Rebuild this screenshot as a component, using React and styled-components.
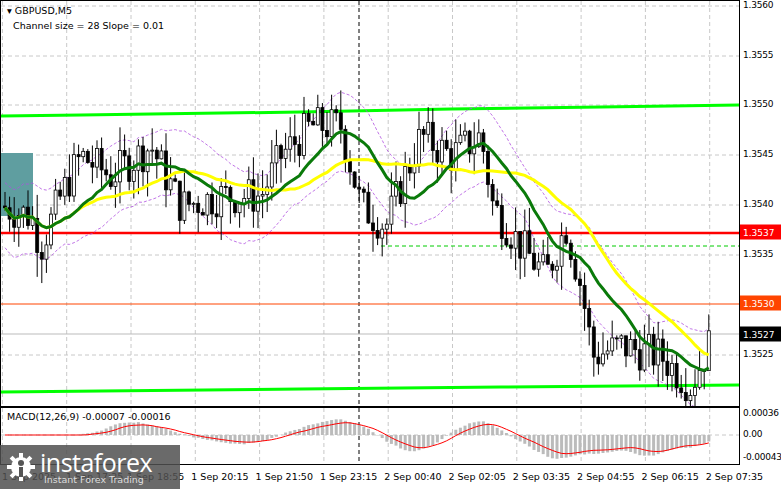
import React from "react";
import styled, { createGlobalStyle } from "styled-components";

const Global = createGlobalStyle`
  html,body{margin:0;padding:0;background:#fff;}
  body{font-family:"DejaVu Sans",Tahoma,sans-serif;}
`;
const W = 740;
const Page = styled.div`width:781px;height:489px;display:flex;flex-direction:column;background:#fff;position:relative;overflow:hidden;`;
const Row = styled.div`display:flex;height:${p => p.h}px;`;
const Pane = styled.div`width:${W - 2}px;height:${p => p.h - 2}px;border:1px solid #000;position:relative;flex:none;`;
const Axis = styled.div`flex:1;position:relative;font-size:9px;color:#000;`;
const Tick = styled.div`position:absolute;left:3px;transform:translateY(-50%);white-space:nowrap;letter-spacing:-0.2px;`;
const Tag = styled.div`position:absolute;left:0;width:38px;height:15px;transform:translateY(-50%);background:${p => p.bg};color:${p => p.fg};display:flex;align-items:center;padding-left:3px;font-size:9px;`;
const TimeRow = styled.div`height:24px;position:relative;font-size:9.5px;`;
const TimeLbl = styled.div`position:absolute;top:6px;white-space:nowrap;`;
const Title = styled.div`position:absolute;left:6px;top:2px;font-size:9.5px;line-height:15px;`;
const MacdTitle = styled.div`position:absolute;left:6px;top:3px;font-size:9.5px;`;
const Logo = styled.div`position:absolute;left:0;bottom:0;width:180px;height:44px;background:rgba(80,80,80,0.85);display:flex;align-items:center;gap:4px;padding-left:6px;box-sizing:border-box;color:#fff;`;
const LogoText = styled.div`display:flex;flex-direction:column;line-height:1;`;
const Big = styled.div`font-size:25px;font-family:"Open Sans",sans-serif;letter-spacing:-0.5px;`;
const Small = styled.div`font-size:9.5px;color:#ddd;margin-left:4px;`;

const y = p => 5 + (1.356 - p) * 1e5;
const pts = [[0,1.3540],[30,1.3539],[40,1.3536],[60,1.3541],[80,1.3545],[110,1.3543],[150,1.3546],[180,1.3540],[220,1.3541],[260,1.3541],[280,1.3545],[310,1.3548],[340,1.3548],[360,1.3540],[385,1.3538],[400,1.3542],[420,1.3547],[450,1.3545],[480,1.3547],[492,1.3540],[520,1.3536],[545,1.3533],[565,1.3538],[580,1.3532],[592,1.3525],[620,1.3526],[660,1.3525],[690,1.3522],[712,1.3527]];
const interp = x => { for (let i = 1; i < pts.length; i++) if (x <= pts[i][0]) { const [a,b]=pts[i-1],[c,d]=pts[i]; return b+(d-b)*(x-a)/(c-a);} return pts[pts.length-1][1]; };
let seed = 7; const rnd = () => { seed = (seed * 9301 + 49297) % 233280; return seed / 233280; };
const candles = []; let prev = interp(0);
for (let x = 4; x <= 712; x += 4.6) {
  const c = interp(x) + (rnd() - 0.5) * 0.0004;
  const o = prev; const hi = Math.max(o, c) + rnd() * 0.00025; const lo = Math.min(o, c) - rnd() * 0.00025;
  candles.push({ x, o, c, hi, lo }); prev = c;
}
const ma = (n) => { const out = []; for (let i = 0; i < candles.length; i++) { let s = 0, k = 0; for (let j = Math.max(0, i - n); j <= i; j++) { s += candles[j].c; k++; } out.push([candles[i].x, y(s / k)]); } return out; };
const path = a => a.map((p, i) => (i ? "L" : "M") + p[0].toFixed(1) + " " + p[1].toFixed(1)).join(" ");
const ma1 = ma(14), ma2 = ma(28);
const bandU = ma1.map(([x, v], i) => [x, v - 25 - 15 * Math.abs(Math.sin(i / 9))]);
const bandL = ma1.map(([x, v], i) => [x, v + 25 + 15 * Math.abs(Math.cos(i / 8))]);
const times = ["1 Sep 18:55","1 Sep 20:15","1 Sep 21:50","1 Sep 23:15","2 Sep 00:40","2 Sep 02:05","2 Sep 03:35","2 Sep 04:55","2 Sep 06:15","2 Sep 07:35"];
const tx = i => 130 + i * 64.3;
const prices = [["1.3560",5],["1.3555",55],["1.3550",104],["1.3545",154],["1.3540",204],["1.3535",254],["1.3525",354]];
const macd = candles.map((c, i) => [c.x, ma2[i][1] - ma1[i][1]]);

export default function App() {
  return (
    <Page>
      <Global />
      <Row h={407}>
        <Pane h={407}>
          <svg width={W - 2} height={405} style={{ position: "absolute", left: 0, top: 0 }}>
            {prices.map(([, py]) => <line key={py} x1={0} x2={W} y1={py} y2={py} stroke="#c8c8c8" strokeDasharray="4 3" />)}
            {[-1,0,...times.map((_,i)=>i+1)].map(i => <line key={i} x1={tx(i-1)} x2={tx(i-1)} y1={0} y2={405} stroke="#c8c8c8" strokeDasharray="4 3" />)}
            <rect x={0} y={152} width={32} height={63} fill="#5f9ea0" />
            <line x1={358} x2={358} y1={0} y2={405} stroke="#000" strokeDasharray="4 3" />
            <polyline points="0,115 80,114 150,113 300,111 450,108 600,106 740,104" fill="none" stroke="#00ff00" strokeWidth="3" />
            <polyline points="0,391 100,390 300,388 500,386 740,384" fill="none" stroke="#00ff00" strokeWidth="3" />
            <line x1={0} x2={740} y1={232} y2={232} stroke="#ff0000" strokeWidth="2.5" />
            <line x1={0} x2={740} y1={303} y2={303} stroke="#ff4500" />
            <line x1={0} x2={740} y1={333} y2={333} stroke="#bbb" />
            <line x1={380} x2={740} y1={245} y2={245} stroke="#00cc00" strokeDasharray="4 3" />
            <path d={path(bandU)} fill="none" stroke="#b050e0" strokeDasharray="3 2" strokeWidth="0.8" />
            <path d={path(bandL)} fill="none" stroke="#b050e0" strokeDasharray="3 2" strokeWidth="0.8" />
            {candles.map((c, i) => (
              <g key={i}>
                <line x1={c.x} x2={c.x} y1={y(c.hi)} y2={y(c.lo)} stroke="#000" />
                <rect x={c.x - 1.5} y={Math.min(y(c.o), y(c.c))} width={3} height={Math.max(1, Math.abs(y(c.o) - y(c.c)))} fill={c.c >= c.o ? "#fff" : "#000"} stroke="#000" strokeWidth="0.8" />
              </g>
            ))}
            <path d={path(ma2)} fill="none" stroke="#ffff00" strokeWidth="3" />
            <path d={path(ma1)} fill="none" stroke="#0a7a0a" strokeWidth="3" />
          </svg>
          <Title>▾ GBPUSD,M5<br />&nbsp;&nbsp;Channel size = 28 Slope = 0.01</Title>
        </Pane>
        <Axis>
          {prices.map(([t, py]) => <Tick key={t} style={{ top: py }}>{t}</Tick>)}
          <Tag bg="#ff0000" fg="#fff" style={{ top: 232 }}>1.3537</Tag>
          <Tag bg="#ff4500" fg="#fff" style={{ top: 303 }}>1.3530</Tag>
          <Tag bg="#000" fg="#fff" style={{ top: 334 }}>1.3527</Tag>
        </Axis>
      </Row>
      <Row h={58}>
        <Pane h={58}>
          <svg width={W - 2} height={56} style={{ position: "absolute", left: 0, top: 0 }}>
            <line x1={0} x2={W} y1={27} y2={27} stroke="#c8c8c8" strokeDasharray="4 3" />
            {[-1,0,...times.map((_,i)=>i+1)].map(i => <line key={i} x1={tx(i-1)} x2={tx(i-1)} y1={0} y2={56} stroke="#c8c8c8" strokeDasharray="4 3" />)}
            <line x1={358} x2={358} y1={0} y2={56} stroke="#000" strokeDasharray="4 3" />
            {macd.map(([x, v], i) => <line key={i} x1={x} x2={x} y1={27} y2={27 - v * 0.5} stroke="#bbb" strokeWidth="3" />)}
            <path d={path(macd.map(([x, v], i) => [x, 27 - (i > 3 ? (macd[i-1][1]+macd[i-2][1]+macd[i-3][1]) / 3 : v) * 0.4]))} fill="none" stroke="#ff0000" strokeWidth="1" />
          </svg>
          <MacdTitle>MACD(12,26,9) -0.00007 -0.00016</MacdTitle>
        </Pane>
        <Axis>
          <Tick style={{ top: 6 }}>0.00036</Tick>
          <Tick style={{ top: 27 }}>0.00</Tick>
          <Tick style={{ top: 50 }}>-0.00043</Tick>
        </Axis>
      </Row>
      <TimeRow>
        <TimeLbl style={{ left: 2 }}>1 Sep 2025</TimeLbl>
        <TimeLbl style={{ left: 66 }}>1 Sep 17:25</TimeLbl>
        {times.map((t, i) => <TimeLbl key={t} style={{ left: tx(i) - 3 }}>{t}</TimeLbl>)}
      </TimeRow>
      <Logo>
        <svg width="30" height="30" viewBox="0 0 30 30">
          <g fill="#fff">
            {[0,45,90,135,180,225,270,315].map(a => <rect key={a} x="13" y="1" width="4" height="6" transform={`rotate(${a} 15 15)`} />)}
            <circle cx="15" cy="15" r="10" />
          </g>
          <circle cx="15" cy="11" r="3" fill="#555" />
          <rect x="13" y="15" width="4" height="10" fill="#555" />
        </svg>
        <LogoText><Big>instaforex</Big><Small>Instant Forex Trading</Small></LogoText>
      </Logo>
    </Page>
  );
}
